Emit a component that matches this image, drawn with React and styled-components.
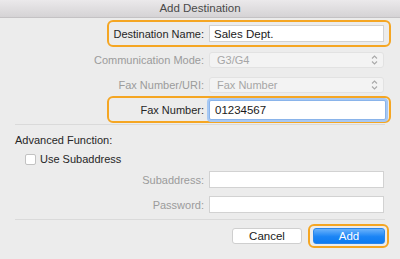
import React from "react";
import styled, { createGlobalStyle, css } from "styled-components";

const Global = createGlobalStyle`
  html, body { margin: 0; padding: 0; background: #ececec; }
  body { font-family: "Liberation Sans", Arial, sans-serif; font-size: 11px; color: #262626; }
  * { box-sizing: border-box; }
`;

const ORANGE = "#f5a623";

const Window = styled.div`
  width: 400px;
  height: 259px;
  background: #ececec;
  display: flex;
  flex-direction: column;
  overflow: hidden;
`;

const TitleBar = styled.div`
  height: 18px;
  flex: none;
  display: flex;
  align-items: center;
  justify-content: center;
  background: linear-gradient(#ebe9eb, #d5d3d5);
  border-bottom: 1px solid #c4c2c4;
  color: #4a4a4a;
  font-size: 11.5px;
  padding-bottom: 1px;
`;

const Body = styled.div`
  flex: 1;
  display: flex;
  flex-direction: column;
  padding: 2px 9px 0 15px;
`;

const Row = styled.div`
  display: flex;
  align-items: center;
  justify-content: flex-end;
  gap: 5px;
  height: ${(p) => p.$h}px;
  margin-top: ${(p) => p.$mt || 0}px;
  padding: 0 5px 0 0;
  border: 2px solid transparent;
  border-radius: 6px;
  ${(p) =>
    p.$highlight &&
    css`
      width: 284px;
      margin-left: auto;
      border-color: ${ORANGE};
    `}
`;

const Label = styled.span`
  white-space: nowrap;
  color: ${(p) => (p.$disabled ? "#9b9b9b" : "#262626")};
`;

const TextBox = styled.div`
  width: 175px;
  height: ${(p) => (p.$focus ? 20 : 17)}px;
  flex: none;
  display: flex;
  align-items: center;
  padding-left: ${(p) => (p.$focus ? 5 : 4)}px;
  background: #fff;
  border: 1px solid #d2d2d2;
  color: #1a1a1a;
  font-size: 11.5px;
  ${(p) =>
    p.$focus &&
    css`
      width: 177px;
      margin-right: -2px;
      border: 1px solid #8ab4ea;
      box-shadow: 0 0 0 2px #a7c8f3;
      border-radius: 2px;
    `}
`;

const Select = styled.div`
  width: 175px;
  height: 16px;
  flex: none;
  display: flex;
  align-items: center;
  justify-content: space-between;
  padding: 0 5px 0 7px;
  background: #f3f3f3;
  border: 1px solid #e2e2e2;
  border-radius: 3px;
  color: #a6a6a6;
`;

const Separator = styled.div`
  height: 1px;
  background: #dadada;
  margin-top: ${(p) => p.$mt}px;
  margin-right: 6px;
`;

const SectionTitle = styled.div`
  margin-top: 8px;
  height: 14px;
  line-height: 14px;
`;

const CheckRow = styled.label`
  display: flex;
  align-items: center;
  gap: 4px;
  margin-top: 5px;
  margin-left: 10px;
  height: 14px;
`;

const CheckBox = styled.span`
  width: 11px;
  height: 11px;
  background: #fff;
  border: 1px solid #c2c2c2;
  border-radius: 2px;
`;

const Buttons = styled.div`
  display: flex;
  align-items: center;
  justify-content: flex-end;
  gap: 6px;
  margin-top: 4px;
  margin-right: 2px;
`;

const Button = styled.div`
  width: ${(p) => (p.$primary ? 72 : 70)}px;
  height: 16px;
  display: flex;
  align-items: center;
  justify-content: center;
  border-radius: 3px;
  font-size: 11.5px;
  ${(p) =>
    p.$primary
      ? css`
          background: linear-gradient(#6ab2fb, #1a84f5 55%, #0f7bf1);
          color: #fff;
          border: 1px solid #2a86ea;
        `
      : css`
          background: #fff;
          color: #1a1a1a;
          border: 1px solid #cfcfcf;
        `}
`;

const FocusBox = styled.div`
  border: 2px solid ${ORANGE};
  border-radius: 6px;
  padding: 2px 2px 2px 3px;
  display: flex;
`;

const Chevrons = () => (
  <svg width="7" height="10" viewBox="0 0 7 10" fill="none" stroke="#a9a9a9" strokeWidth="1.1">
    <polyline points="1,3.5 3.5,1 6,3.5" />
    <polyline points="1,6.5 3.5,9 6,6.5" />
  </svg>
);

export default function App() {
  return (
    <>
      <Global />
      <Window>
        <TitleBar>Add Destination</TitleBar>
        <Body>
          <Row $highlight $h={27}>
            <Label>Destination Name:</Label>
            <TextBox>Sales Dept.</TextBox>
          </Row>
          <Row $h={26}>
            <Label $disabled>Communication Mode:</Label>
            <Select>
              G3/G4
              <Chevrons />
            </Select>
          </Row>
          <Row $h={23}>
            <Label $disabled>Fax Number/URI:</Label>
            <Select>
              Fax Number
              <Chevrons />
            </Select>
          </Row>
          <Row $highlight $h={27}>
            <Label>Fax Number:</Label>
            <TextBox $focus>01234567</TextBox>
          </Row>
          <Separator $mt={1} />
          <SectionTitle>Advanced Function:</SectionTitle>
          <CheckRow>
            <CheckBox />
            Use Subaddress
          </CheckRow>
          <Row $h={25} $mt={1}>
            <Label $disabled>Subaddress:</Label>
            <TextBox />
          </Row>
          <Row $h={25}>
            <Label $disabled>Password:</Label>
            <TextBox />
          </Row>
          <Separator $mt={2} />
          <Buttons>
            <Button>Cancel</Button>
            <FocusBox>
              <Button $primary>Add</Button>
            </FocusBox>
          </Buttons>
        </Body>
      </Window>
    </>
  );
}
